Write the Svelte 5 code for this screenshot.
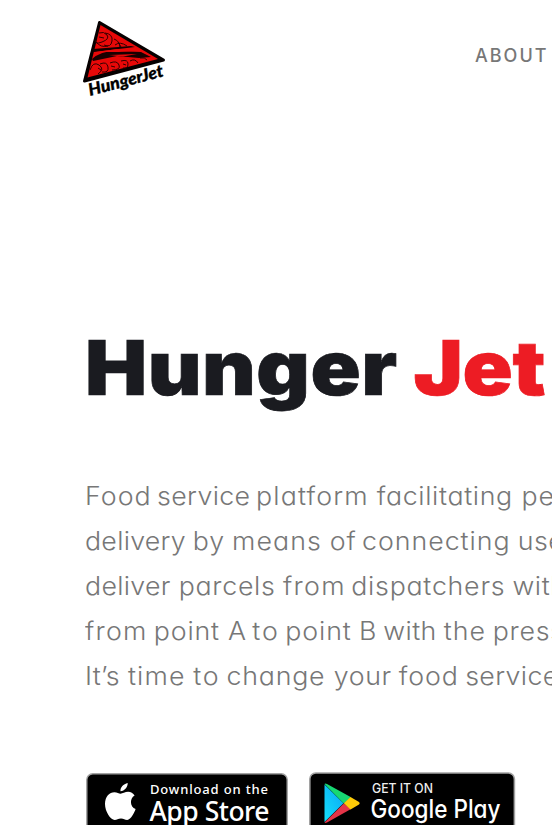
<script>
  // Each word: text, left edge on the line, letter spacing
  const lines = [
    [['Food', 84.8, 1.7], ['service', 156.8, 1], ['platform', 255.8, 1.8], ['facilitating', 376.5, 1.3], ['pe', 521.3, 1.5]],
    [['delivery', 85.3, 0.9], ['by', 193, 1.6], ['means', 232.3, 1.7], ['of', 330, 1.6], ['connecting', 362.4, 1.6], ['use', 518, 1.2]],
    [['deliver', 85.3, 0.95], ['parcels', 179, 1.35], ['from', 283.2, 2], ['dispatchers', 351.5, 1.4], ['with', 512.8, 1.2]],
    [['from', 85.3, 1.9], ['point', 154, 1.5], ['A', 228.3, 0], ['to', 252.6, 2.5], ['point', 285.7, 1.5], ['B', 359.4, 0], ['with', 383.7, 1], ['the', 444, 1.7], ['press', 493, 1.4]],
    [['It’s', 84.8, 0.9], ['time', 127.8, 1.8], ['to', 193, 2.5], ['change', 226.4, 1.4], ['your', 333.7, 1.2], ['food', 398.7, 1.5], ['service', 465, 1]]
  ];
  const stretch = 1.05;
  const slot = (line, i) => ((line[i + 1]?.[1] ?? line[i][1] + 120) - line[i][1]) / stretch;
</script>

<div class="page">
  <header>
    <svg class="logo" width="86" height="80" viewBox="0 0 86 80" aria-label="HungerJet">
      <path d="M18.500 3.500 82.500 41 3.500 62Z" fill="#060000" stroke="#060000" stroke-width="3" stroke-linejoin="round" />
      <path d="M19.500 6 77 40 6.500 58.500Z" fill="#e80808" />
      <g fill="none" stroke="#310000" stroke-width="1">
        <path d="M18 14q5-2 8 2t-5 7-6-2M24 14q8 1 7 8t-8 4M15 23q5 6 12 4M33 20q6 2 6 9M34 26q5-4 12 1" />
        <path d="M9 51q3-9 9-5t-1 9M19 45q7-3 8 3t-6 5M29 44q7-3 9 2t-7 5M40 42q7-2 7 3t-5 4M49 42q5-3 8 2M59 39q5-1 7 2" />
        <path d="M17 49l3 2M30 47l4 1M42 45l3 1M18 18l5 1M37 23l3 5" />
      </g>
      <path d="M11 40Q20 32 34 32L60 33 70 38 58 39 36 37 12 42ZM12 30 50 27 54 28 13 33Z" fill="#180000" />
      <path d="M15 33 36 30 54 32 38 33ZM28 36 56 35 42 37.500Z" fill="#e80808" />
      <g transform="rotate(-15 9 77)">
        <text x="9" y="77" textLength="77" lengthAdjust="spacingAndGlyphs">HungerJet</text>
      </g>
    </svg>
    <nav><a href="#about">ABOUT</a></nav>
  </header>

  <main>
    <h1><span class="dark">Hunger</span><span class="red">Jet</span></h1>
    <div class="copy">
      {#each lines as line}
        <p style:margin-left="{line[0][1]}px">
          {#each line as [word, , spacing], i}<span style:width="{slot(line, i)}px" style:letter-spacing="{spacing / stretch - 0.62}px">{word}</span>{/each}
        </p>
      {/each}
    </div>

    <div class="badges">
      <svg class="apple" width="202" height="62" viewBox="0 0 202 62">
        <rect x=".8" y=".8" width="200.4" height="60" rx="6" fill="#000" stroke="#a2a2a2" stroke-width="1.4" />
        <path transform="translate(19 10)" fill="#fff" d="M22.7 0C23 3.500 19.500 8.200 15.500 8.200 15 4.800 18.500.8 22.700 0ZM15.500 10.700C17.500 10.700 20 8.800 23.200 8.800 25.700 8.900 28.200 10.200 29.600 12.400 24.500 15.300 24.700 23.600 30.600 26.100 29.500 29.500 26.100 36.700 22.200 36.900 19.800 36.900 18.800 35.500 16 35.500 13 35.500 12 36.900 9.700 37 5.500 37 0 28.500 0 21 0 13.500 4.500 9.200 9.400 9.200 12 9.200 14 10.700 15.500 10.700Z" />
        <text class="small" x="64" y="20.500" textLength="118">Download on the</text>
        <text class="big" x="63.500" y="47.500" textLength="120">App Store</text>
      </svg>
      <svg class="google" width="207" height="63" viewBox="0 0 207 63">
        <rect x=".8" y="1" width="204.600" height="61" rx="6" fill="#000" stroke="#a2a2a2" stroke-width="1.6" />
        <defs>
          <linearGradient id="blue" x1="1" y1="0" x2="0" y2="1">
            <stop offset="0" stop-color="#09a5f5" /><stop offset="1" stop-color="#14dffa" />
          </linearGradient>
        </defs>
        <path d="M15.500 12.500 34.500 31.300 15.500 50Z" fill="url(#blue)" />
        <path d="M15.500 12Q16 11 18 12L42 25.300 34.800 31.500Z" fill="#17d873" />
        <path d="M15.500 50.500 34.800 31.500 42 37 18 50.500Q16 51.300 15.500 50.500Z" fill="#e43448" />
        <path d="M41.500 25 50 30Q51.500 31.200 50 32.500L41.500 37.400 34.800 31.300Z" fill="#ffcb08" />
        <text class="get" x="63" y="20.700" textLength="61" lengthAdjust="spacingAndGlyphs">GET IT ON</text>
        <text class="play" x="61.500" y="45.800" textLength="130" lengthAdjust="spacingAndGlyphs">Google Play</text>
      </svg>
    </div>
  </main>
</div>

<style>
  :global(body) { margin: 0; background: #fff; }
  .page { width: 552px; height: 825px; overflow: hidden; font-family: Inter, sans-serif; }
  header { display: flex; justify-content: space-between; height: 120px; padding: 19px 0 0 81px; box-sizing: border-box; }
  .logo { overflow: visible; }
  .logo text { font: italic 900 17px Lato, sans-serif; fill: #000; stroke: #000; stroke-width: .3px; }
  nav { width: 77px; padding-top: 26px; }
  a { font-size: 18px; line-height: 22px; font-weight: 500; letter-spacing: 2px; color: #777; text-decoration: none; }
  h1 { display: flex; gap: 14.500px; margin: 201px 0 0 85px; font-size: 76px; line-height: 92px; font-weight: 900; color: #1a1b20; transform: scaleX(1.09); transform-origin: 0 0; -webkit-text-stroke: .7px; }
  .dark { letter-spacing: .5px; }
  .red { color: #ed1c24; letter-spacing: -.3px; }
  .copy { margin-top: 60px; }
  p { margin: 0; height: 45px; line-height: 45px; font-size: 25.500px; font-weight: 300; color: #777; white-space: nowrap; transform: scaleX(1.05); transform-origin: 0 0; font-feature-settings: "cv11"; }
  p span { display: inline-block; }
  .badges { display: flex; align-items: flex-start; gap: 21px; margin: 74px 0 0 86px; }
  .apple { margin-top: 1px; }
  svg { flex: none; }
  .small { font: 500 13px "Noto Sans", sans-serif; fill: #fff; }
  .big { font: 500 26.500px "Noto Sans", sans-serif; fill: #fff; }
  .get { font: 500 13px Inter, sans-serif; fill: #eee; }
  .play { font: 500 25px Inter, sans-serif; font-feature-settings: "cv11"; fill: #fff; }
</style>
